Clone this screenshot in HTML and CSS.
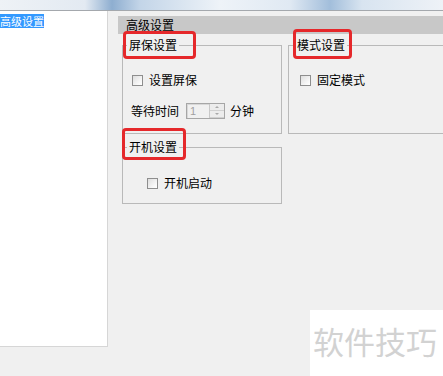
FILE: index.html
```html
<!DOCTYPE html>
<html lang="zh-CN">
<head>
  <meta charset="UTF-8">
  <title>高级设置</title>
  <link rel="stylesheet" href="styles.css">
</head>
<body>
  <div class="titlebar"></div>

  <div class="window">
    <div class="sidebar">
      <div class="tree-item selected">高级设置</div>
    </div>

    <div class="main">
      <div class="header">高级设置</div>

      <div class="groups">
        <fieldset class="group">
          <legend><span class="mark mark-saver"></span>屏保设置</legend>
          <div class="group-body body-saver">
            <label class="check"><input type="checkbox" class="box">设置屏保</label>
            <div class="wait-row">
              <span>等待时间</span>
              <span class="spin">
                <span class="spin-value">1</span>
                <span class="spin-btns">
                  <span class="spin-btn up"></span>
                  <span class="spin-btn down"></span>
                </span>
              </span>
              <span>分钟</span>
            </div>
          </div>
        </fieldset>

        <fieldset class="group group-mode">
          <legend><span class="mark mark-mode"></span>模式设置</legend>
          <div class="group-body body-mode">
            <label class="check"><input type="checkbox" class="box">固定模式</label>
          </div>
        </fieldset>

        <fieldset class="group">
          <legend><span class="mark mark-boot"></span>开机设置</legend>
          <div class="group-body body-boot">
            <label class="check"><input type="checkbox" class="box">开机启动</label>
          </div>
        </fieldset>
      </div>
    </div>
  </div>

  <div class="watermark">软件技巧</div>
</body>
</html>
```

FILE: styles.css
```css
body {
  margin: 0;
  background-color: #f0f0f0;
  font-family: "Noto Sans CJK SC", "Liberation Sans", sans-serif;
  font-size: 12px;
  color: #000;
  overflow: hidden;
  width: 443px;
  height: 376px;
  position: relative;
}

.titlebar {
  height: 10px;
  border-bottom: 1px solid #a4a8ad;
  background: linear-gradient(90deg, #eef2f6 0px, #e3eaf2 85px, #8eaed0 112px, #c3d5e8 140px,
    #eef3f8 220px, #e0e9f3 290px, #a2bedb 330px, #d8e4f0 362px, #eef2f7 443px);
}

.window {
  display: flex;
}

.sidebar {
  width: 107px;
  height: 334px;
  background: #fff;
  border-right: 1px solid #d6d6d6;
  border-bottom: 1px solid #d6d6d6;
  padding-top: 1px;
  box-sizing: content-box;
}

.tree-item {
  display: inline-block;
  height: 14px;
  line-height: 14px;
  font-size: 11px;
}
.tree-item.selected {
  background: #3399ff;
  color: #fff;
}

.main {
  flex: 1;
  padding: 5px 0 0 10px;
  min-width: 0;
}

.header {
  height: 18px;
  line-height: 18px;
  padding-left: 8px;
  background: #c8c8c8;
}

.groups {
  display: grid;
  grid-template-columns: 160px 1fr;
  grid-template-rows: 96px 64px;
  gap: 6px;
  margin: 4px 0 0 4px;
}

.group {
  margin: 0;
  padding: 0;
  min-width: 0;
  border: 1px solid #b9b9b9;
}
.group-mode {
  margin-right: -12px;
}

.group legend {
  position: relative;
  margin-left: 4px;
  padding: 0 2px;
  line-height: 14px;
  height: 14px;
}
.group-mode legend {
  margin-left: 6px;
}

.mark {
  position: absolute;
  border: 3px solid #e5282b;
  border-radius: 4px;
}
.mark-saver { left: -4px; right: -17px; top: -7px; bottom: -7px; }
.mark-mode  { left: -2px; right: -5px;  top: -9px; bottom: -7px; }
.mark-boot  { left: -5px; right: -7px;  top: -12px; bottom: -6px; }

.body-saver { padding: 21px 0 0 9px; }
.body-mode  { padding: 21px 0 0 11px; }
.body-boot  { padding: 22px 0 0 24px; }

.check {
  display: flex;
  align-items: center;
  gap: 6px;
  height: 14px;
  line-height: 14px;
}

.box {
  appearance: none;
  -webkit-appearance: none;
  margin: 0;
  width: 11px;
  height: 11px;
  border: 1px solid #8e8e8e;
  background: linear-gradient(135deg, #dedede, #f7f7f7 70%, #ffffff);
}

.wait-row {
  display: flex;
  align-items: center;
  gap: 7px;
  margin: 16px 0 0 -1px;
  height: 16px;
  line-height: 16px;
}
.wait-row .spin {
  margin-right: -2px;
}

.spin {
  display: flex;
  width: 39px;
  height: 16px;
  box-sizing: border-box;
  border: 1px solid #a6a6a6;
  box-shadow: inset 1px 1px #d8d8d8;
  background: #f0f0f0;
}
.spin-value {
  flex: 1;
  padding-left: 3px;
  line-height: 14px;
  color: #a0a0a0;
  font-family: "Liberation Sans", sans-serif;
  font-size: 11px;
}
.spin-btns {
  display: flex;
  flex-direction: column;
  width: 14px;
  border-left: 1px solid #c8c8c8;
}
.spin-btn {
  flex: 1;
  position: relative;
  background: #ececec;
  border-bottom: 1px solid #d0d0d0;
}
.spin-btn::after {
  content: "";
  position: absolute;
  left: 5px;
  top: 2px;
  border-left: 2px solid transparent;
  border-right: 2px solid transparent;
}
.spin-btn.up::after { border-bottom: 2px solid #a8a8a8; }
.spin-btn.down::after { border-top: 2px solid #a8a8a8; top: 2px; }

.watermark {
  position: absolute;
  left: 310px;
  top: 310px;
  width: 133px;
  height: 66px;
  box-sizing: border-box;
  padding: 11px 0 0 3px;
  background: #fff;
  color: #d2d2d2;
  font-size: 31px;
  line-height: 40px;
  white-space: nowrap;
}
```
